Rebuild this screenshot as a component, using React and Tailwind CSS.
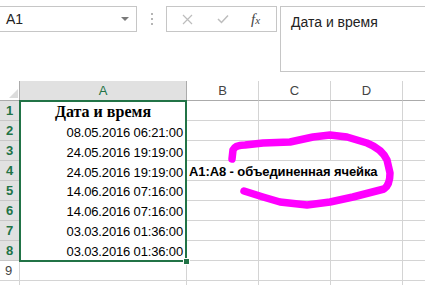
import React from "react";

const dates = [
  "08.05.2016 06:21:00",
  "24.05.2016 19:19:00",
  "24.05.2016 19:19:00",
  "14.06.2016 07:16:00",
  "14.06.2016 07:16:00",
  "03.03.2016 01:36:00",
  "03.03.2016 01:36:00",
];

const cell = "border-r border-b border-[#d4d4d4]";
const rowHead = "flex items-center justify-center border-r border-b text-[13px] leading-none";

const App = () => {
  return (
    <div
      style={{ fontFamily: "'Liberation Sans', Arial, sans-serif" }}
      className="relative w-[425px] h-[285px] overflow-hidden bg-white text-[#222]"
    >
      {/* Formula bar */}
      <div className="flex items-start h-[81px] pt-[6px]">
        <div className="relative -ml-px w-[138px] h-[26px] border border-[#c6c6c6] flex items-center pl-[6px] text-[14px]">
          A1
          <span className="absolute right-[7px] top-[10px] w-0 h-0 border-l-[4px] border-r-[4px] border-t-[4px] border-l-transparent border-r-transparent border-t-[#7a7a7a]" />
        </div>
        <div className="flex flex-col gap-[3px] mt-[7px] ml-[14px] mr-[13px]">
          <span className="w-[2px] h-[2px] bg-[#b5b5b5]" />
          <span className="w-[2px] h-[2px] bg-[#b5b5b5]" />
          <span className="w-[2px] h-[2px] bg-[#b5b5b5]" />
        </div>
        <div className="w-[111px] h-[26px] border border-[#c6c6c6] flex items-center text-[#bdbdbd]">
          <svg className="ml-[15px]" width="11" height="11" viewBox="0 0 11 11">
            <path d="M1 1L10 10M10 1L1 10" stroke="currentColor" strokeWidth="1.2" />
          </svg>
          <svg className="ml-[24px]" width="12" height="10" viewBox="0 0 12 10">
            <path d="M1 5L4.5 8.5L11 1.5" stroke="currentColor" strokeWidth="1.5" fill="none" />
          </svg>
          <span
            style={{ fontFamily: "'Liberation Serif', serif" }}
            className="ml-[22px] italic text-[15px] text-[#444] leading-none"
          >
            f<span className="text-[11px]">x</span>
          </span>
        </div>
        <div className="ml-[3px] flex-1 h-[66px] border border-r-0 border-[#c6c6c6] pl-[10px] pt-[5px] text-[14px]">
          Дата и время
        </div>
      </div>

      {/* Sheet */}
      <div className="grid grid-cols-[20px_167px_72px_72px_72px_1fr] grid-rows-[20px_repeat(9,20px)_20px]">
        {/* header row */}
        <div className="relative border-r border-b border-[#ababab]">
          <svg className="absolute right-[1px] bottom-[2px]" width="9" height="9" viewBox="0 0 9 9">
            <polygon points="9,0 9,9 0,9" fill="#dcdcdc" />
          </svg>
        </div>
        <div className="flex items-center justify-center bg-[#e1e1e1] border-r border-b border-r-[#ababab] border-b-[#ababab] text-[13px] text-[#217346]">
          A
        </div>
        {["B", "C", "D"].map((c) => (
          <div
            key={c}
            className="flex items-center justify-center border-r border-r-[#d4d4d4] border-b border-b-[#ababab] text-[13px] text-[#444]"
          >
            {c}
          </div>
        ))}
        <div className="border-b border-b-[#ababab]" />

        {/* row headers 1-8 */}
        {[1, 2, 3, 4, 5, 6, 7, 8].map((n) => (
          <div
            key={n}
            style={{ gridColumn: 1, gridRow: n + 1 }}
            className={`${rowHead} bg-[#e1e1e1] border-[#c8c8c8] text-[#217346] font-bold`}
          >
            {n}
          </div>
        ))}

        {/* merged A1:A8 */}
        <div className="col-start-2 row-start-2 row-span-8 flex flex-col border-r border-b border-[#d4d4d4]">
          <div
            style={{ fontFamily: "'Liberation Serif', 'Times New Roman', serif" }}
            className="h-[20px] flex items-end justify-center pb-[1px] text-[16px] font-bold text-black leading-none"
          >
            Дата и время
          </div>
          {dates.map((d, i) => (
            <div
              key={i}
              className="h-[20px] flex items-end justify-end pr-[3px] pb-[2px] text-[13px] tracking-[-0.15px] text-black leading-none"
            >
              {d}
            </div>
          ))}
        </div>

        {/* columns B..E rows 1..8 */}
        {[1, 2, 3, 4, 5, 6, 7, 8].map((n) =>
          n === 4 ? (
            <React.Fragment key={n}>
              <div
                style={{ gridRow: n + 1 }}
                className="col-start-3 col-span-3 border-r border-b border-[#d4d4d4] flex items-end pl-[2px] pb-[2px] text-[13px] tracking-[-0.1px] font-bold text-black leading-none whitespace-nowrap"
              >
                A1:A8 - объединенная ячейка
              </div>
              <div style={{ gridRow: n + 1 }} className="col-start-6 border-b border-[#d4d4d4]" />
            </React.Fragment>
          ) : (
            <React.Fragment key={n}>
              <div style={{ gridRow: n + 1 }} className={`col-start-3 ${cell}`} />
              <div style={{ gridRow: n + 1 }} className={`col-start-4 ${cell}`} />
              <div style={{ gridRow: n + 1 }} className={`col-start-5 ${cell}`} />
              <div style={{ gridRow: n + 1 }} className="col-start-6 border-b border-[#d4d4d4]" />
            </React.Fragment>
          )
        )}

        {/* row 9 and 10 */}
        {[9, 10].map((n) => (
          <React.Fragment key={n}>
            <div style={{ gridRow: n + 1 }} className={`${rowHead} col-start-1 border-[#d4d4d4] text-[#444] justify-start pl-[5px]`}>
              {n === 9 ? "9" : ""}
            </div>
            <div style={{ gridRow: n + 1 }} className={`col-start-2 ${cell}`} />
            <div style={{ gridRow: n + 1 }} className={`col-start-3 ${cell}`} />
            <div style={{ gridRow: n + 1 }} className={`col-start-4 ${cell}`} />
            <div style={{ gridRow: n + 1 }} className={`col-start-5 ${cell}`} />
            <div style={{ gridRow: n + 1 }} className="col-start-6 border-b border-[#d4d4d4]" />
          </React.Fragment>
        ))}
      </div>

      {/* selection outline + fill handle */}
      <div className="absolute left-[19px] top-[100px] w-[168px] h-[162px] border-2 border-[#217346] pointer-events-none" />
      <div className="absolute left-[183px] top-[258px] w-[7px] h-[7px] bg-[#217346] border border-white" />

      {/* magenta annotation */}
      <svg className="absolute left-0 top-0 pointer-events-none" width="425" height="285">
        <path
          d="M232 159 L233 150 Q235 145 245 145 L263 143 L290 142 L313 137 L330 135 L347 137 L367 143 Q382 149 387 160 L390 173 Q390 185 384 189 L353 197 L330 202 L307 205 L280 202 L263 197 L244 191"
          fill="none"
          stroke="#ff00ff"
          strokeWidth="7.5"
          strokeLinecap="round"
          strokeLinejoin="round"
        />
      </svg>
    </div>
  );
};

export default App;
